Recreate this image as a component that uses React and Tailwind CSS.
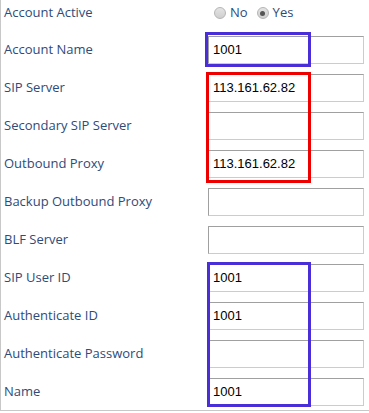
const rows = [
  { label: 'Account Name', value: '1001' },
  { label: 'SIP Server', value: '113.161.62.82' },
  { label: 'Secondary SIP Server', value: '' },
  { label: 'Outbound Proxy', value: '113.161.62.82' },
  { label: 'Backup Outbound Proxy', value: '' },
  { label: 'BLF Server', value: '' },
  { label: 'SIP User ID', value: '1001' },
  { label: 'Authenticate ID', value: '1001' },
  { label: 'Authenticate Password', value: '' },
  { label: 'Name', value: '1001' },
];

function Radio({ checked }) {
  return (
    <span className="w-[12px] h-[12px] rounded-full border border-[#b5b5b5] bg-gradient-to-b from-[#e4e4e4] to-[#cfcfcf] flex items-center justify-center">
      {checked && <span className="w-[5px] h-[5px] rounded-full bg-[#555]" />}
    </span>
  );
}

export default function App() {
  return (
    <div className="relative w-[369px] h-[413px] bg-white overflow-hidden font-['Open_Sans',sans-serif] text-[13px] text-[#2e4b7a]">
      <div className="w-full h-[411px] border-l border-b border-[#c8c8c8]">
        {/* Account Active */}
        <div className="flex h-[30px] items-center pb-[4px]">
          <div className="w-[205px] pl-[3px]">Account Active</div>
          <div className="flex items-center gap-[4px] pl-[8px]">
            <Radio />
            <span>No</span>
            <span className="w-[1px]" />
            <Radio checked />
            <span>Yes</span>
          </div>
        </div>

        {rows.map((row) => (
          <div key={row.label} className="flex h-[38px] pt-[6px] pb-[4px]">
            <div className="w-[207px] pl-[3px] flex items-center">{row.label}</div>
            <div className="w-[156px] h-[28px] border border-[#cccccc] border-t-[#a0a0a0] border-l-[#a0a0a0] pl-[4px] flex items-center text-black font-['Liberation_Sans',Arial,sans-serif] text-[13px]">
              {row.value}
            </div>
          </div>
        ))}
      </div>

      {/* annotation boxes */}
      <div className="absolute left-[205px] top-[32px] w-[106px] h-[35px] border-[3px] border-[#4a2ed8]" />
      <div className="absolute left-[206px] top-[72px] w-[105px] h-[111px] border-[3px] border-[#ee0000]" />
      <div className="absolute left-[207px] top-[262px] w-[104px] h-[145px] border-[3px] border-[#4a2ed8]" />
    </div>
  );
}
